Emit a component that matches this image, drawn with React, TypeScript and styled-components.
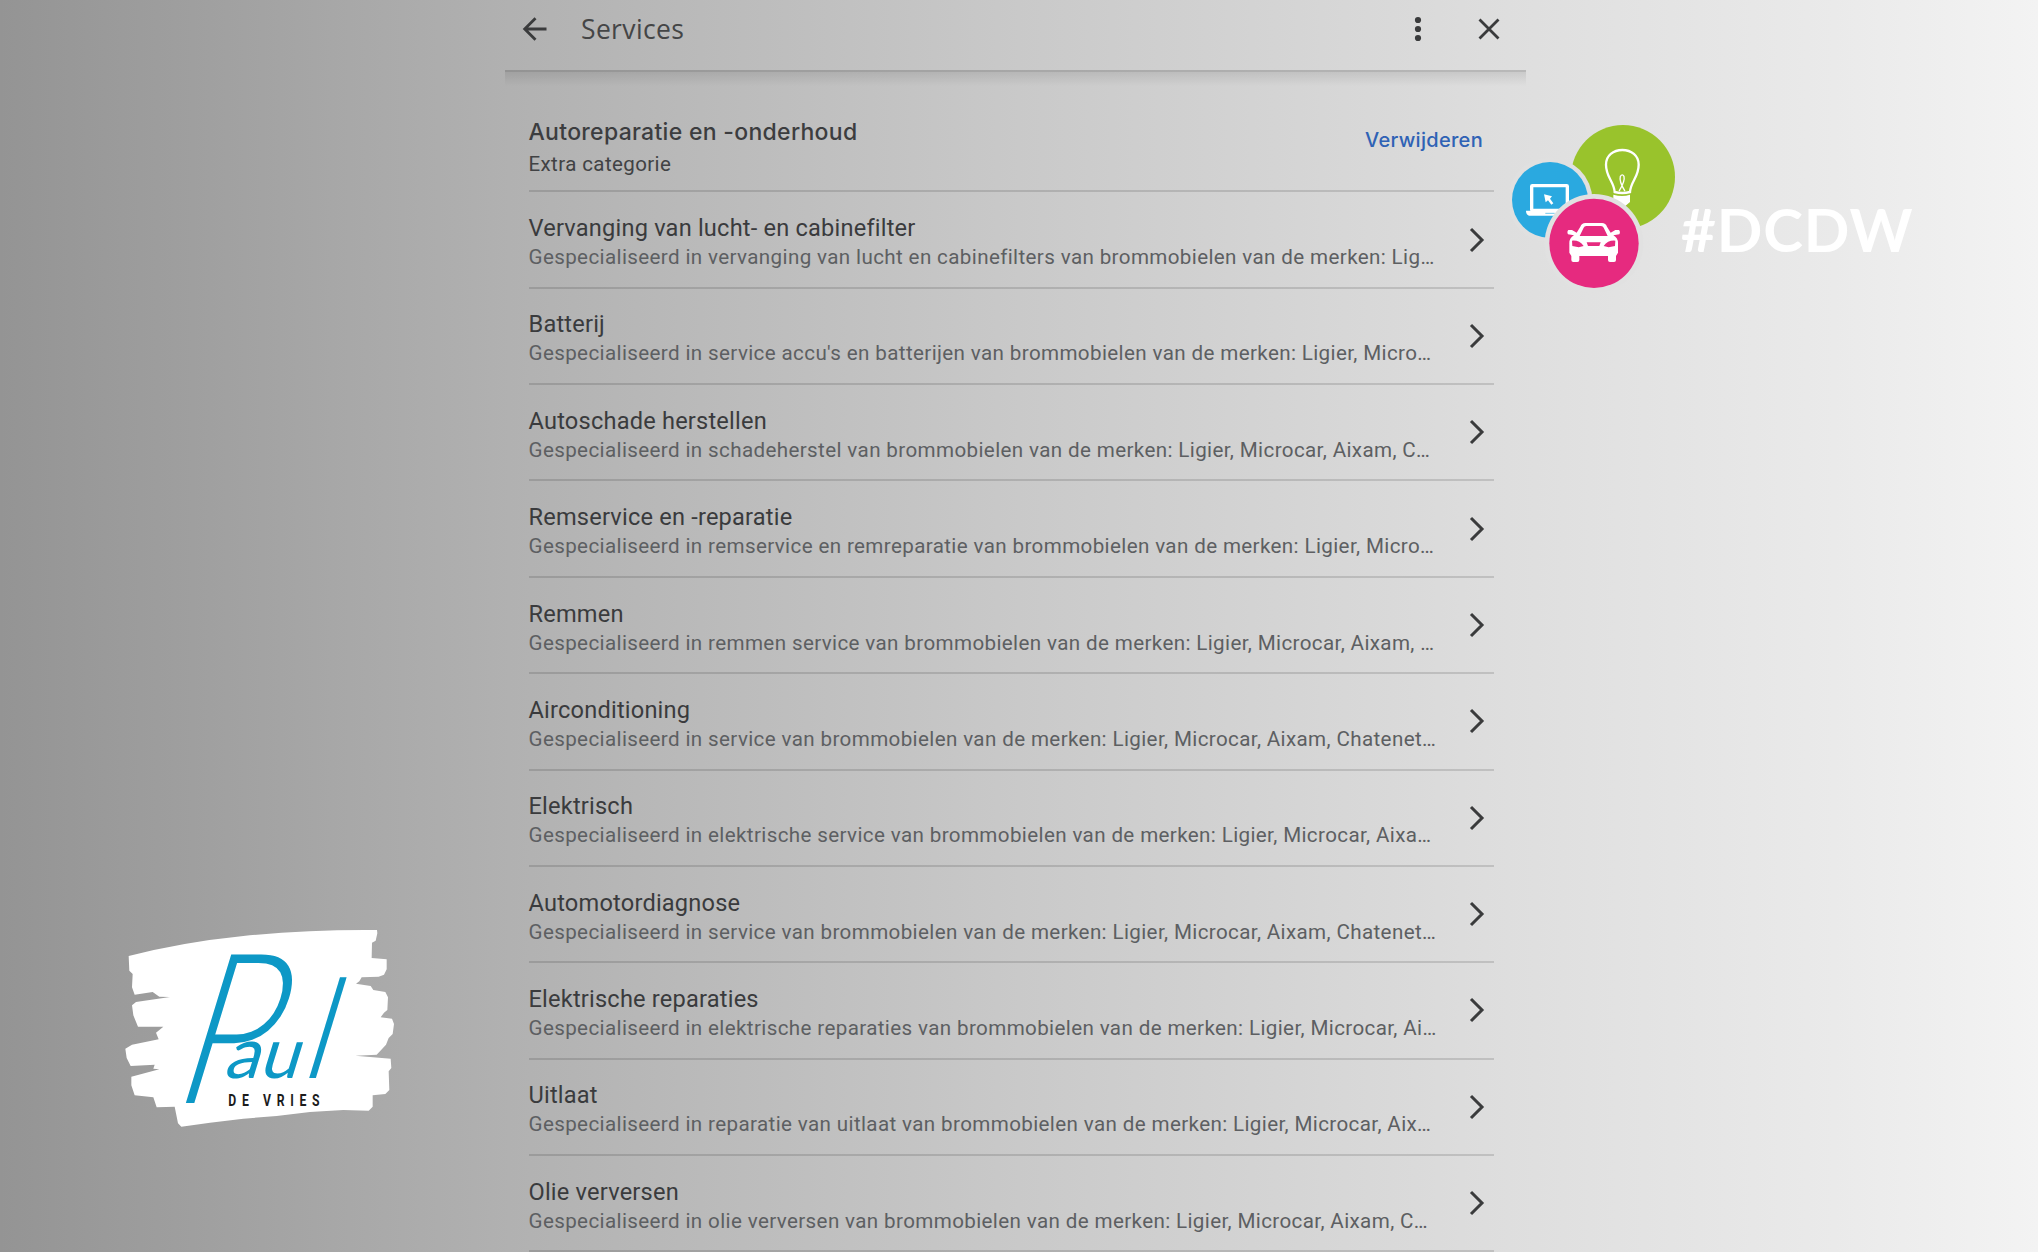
import React from "react";
import styled, { createGlobalStyle } from "styled-components";

const GlobalStyle = createGlobalStyle`
  * { box-sizing: border-box; }
  html, body { margin: 0; padding: 0; overflow: hidden; }
  body { font-family: Roboto, "Liberation Sans", sans-serif; }
`;

const Page = styled.div`
  display: grid;
  grid-template-columns: 505px 1021px 1fr;
  width: 2038px;
  height: 1252px;
  overflow: hidden;
  background: linear-gradient(
    90deg,
    #949494 0%,
    #a9a9a9 18%,
    #b1b1b1 25%,
    #c9c9c9 50%,
    #dedede 74%,
    #eaeaea 90%,
    #f3f3f3 100%
  );
`;

const LeftColumn = styled.aside`
  display: flex;
  flex-direction: column;
  justify-content: flex-end;
  padding: 0 0 112px 110px;
`;

const Panel = styled.main`
  display: flex;
  flex-direction: column;
  min-width: 0;
`;

const RightColumn = styled.aside`
  display: flex;
  align-items: flex-start;
  padding-top: 120px;
`;

const Header = styled.header`
  position: relative;
  flex: none;
  display: flex;
  align-items: center;
  height: 72px;
  padding: 0 23px 13px 15px;
  border-bottom: 2px solid rgba(0, 0, 0, 0.17);

  &::after {
    content: "";
    position: absolute;
    left: 0;
    right: 0;
    top: 72px;
    height: 14px;
    background: linear-gradient(180deg, rgba(0, 0, 0, 0.09), rgba(0, 0, 0, 0));
  }
`;

const HeaderTitle = styled.h1`
  flex: 1;
  margin: 0 0 0 31px;
  font: 400 26.5px/34px "Open Sans", sans-serif;
  letter-spacing: 0.35px;
  color: #444546;
`;

const IconButton = styled.button<{ $gap?: number }>`
  display: flex;
  margin: 0 0 0 ${(p) => p.$gap ?? 0}px;
  padding: 0;
  border: 0;
  background: none;
  color: #3a3b3c;
`;

const List = styled.section`
  margin: 0 32px 0 23.5px;
`;

const Category = styled.div`
  display: flex;
  justify-content: space-between;
  height: 120.4px;
  padding-top: 44px;
  border-bottom: 2px solid rgba(0, 0, 0, 0.13);
`;

const CategoryTitle = styled.h2`
  margin: 0;
  font: 500 23px/32px Inter, sans-serif;
  letter-spacing: 0.3px;
  color: #3c3d3f;
`;

const CategoryNote = styled.div`
  font-size: 20.5px;
  line-height: 32px;
  letter-spacing: 0.4px;
  color: #414244;
`;

const RemoveButton = styled.button`
  align-self: flex-start;
  margin: 10px 11px 0 0;
  padding: 0;
  border: 0;
  background: none;
  font: 500 20px/28px Inter, sans-serif;
  letter-spacing: 0.3px;
  color: #2f62b5;
`;

const Row = styled.article`
  display: flex;
  align-items: center;
  height: 96.36px;
  border-bottom: 2px solid rgba(0, 0, 0, 0.13);
`;

const RowText = styled.div`
  flex: 1;
  min-width: 0;
  padding-top: 6px;
`;

const RowTitle = styled.h3`
  margin: 0;
  font-size: 23.6px;
  font-weight: 400;
  line-height: 30px;
  letter-spacing: 0.2px;
  color: #3a3b3d;
`;

const RowDescription = styled.p`
  margin: 0;
  font-size: 20.6px;
  line-height: 29px;
  letter-spacing: 0.37px;
  white-space: nowrap;
  color: #5d5f62;
`;

const Chevron = styled.svg`
  flex: none;
  margin-right: 8px;
`;

const Bubbles = styled.svg`
  flex: none;
  margin-left: -16px;
`;

const Hashtag = styled.div`
  margin: 73px 0 0 1px;
  font: 700 60px/72px Lato, sans-serif;
  letter-spacing: 0.9px;
  color: #fff;
`;

const BrandMark = styled.svg`
  overflow: visible;
`;

const services: [string, string][] = [
  ["Vervanging van lucht- en cabinefilter", "Gespecialiseerd in vervanging van lucht en cabinefilters van brommobielen van de merken: Lig…"],
  ["Batterij", "Gespecialiseerd in service accu's en batterijen van brommobielen van de merken: Ligier, Micro…"],
  ["Autoschade herstellen", "Gespecialiseerd in schadeherstel van brommobielen van de merken: Ligier, Microcar, Aixam, C…"],
  ["Remservice en -reparatie", "Gespecialiseerd in remservice en remreparatie van brommobielen van de merken: Ligier, Micro…"],
  ["Remmen", "Gespecialiseerd in remmen service van brommobielen van de merken: Ligier, Microcar, Aixam, …"],
  ["Airconditioning", "Gespecialiseerd in service van brommobielen van de merken: Ligier, Microcar, Aixam, Chatenet…"],
  ["Elektrisch", "Gespecialiseerd in elektrische service van brommobielen van de merken: Ligier, Microcar, Aixa…"],
  ["Automotordiagnose", "Gespecialiseerd in service van brommobielen van de merken: Ligier, Microcar, Aixam, Chatenet…"],
  ["Elektrische reparaties", "Gespecialiseerd in elektrische reparaties van brommobielen van de merken: Ligier, Microcar, Ai…"],
  ["Uitlaat", "Gespecialiseerd in reparatie van uitlaat van brommobielen van de merken: Ligier, Microcar, Aix…"],
  ["Olie verversen", "Gespecialiseerd in olie verversen van brommobielen van de merken: Ligier, Microcar, Aixam, C…"],
];

const PaulLogo = () => (
  <BrandMark width="300" height="230" viewBox="0 0 900 690">
    <path
      fill="#fff"
      d="M56 138 Q220 96 400 78 Q600 58 801 60 L802 70 L797 92 L786 98 L785 144 L830 148 L830 178 L822 194 L806 200 L755 202 L748 214 L738 221 L782 228 L790 240 L826 246 L834 262 L832 300 L822 308 L812 322 L846 326 L852 342 L848 372 L836 384 L828 404 L800 434 L736 437 L842 446 L844 474 L836 484 L838 540 L826 552 L788 556 L788 590 L776 602 L700 600 L600 606 L500 618 L400 626 L300 638 L214 650 L204 640 L194 590 L140 592 L130 562 L74 556 L64 526 L64 500 L148 478 L130 476 L134 464 L62 468 L50 444 L46 416 L66 404 L146 388 L138 368 L160 350 L84 350 L70 316 L66 286 L78 276 L180 261 L148 260 L128 246 L74 254 L66 232 L68 192 L58 182 Z"
    />
    <g fill="#0d98c6" fontFamily="Lato, sans-serif" fontWeight="300">
      <text transform="translate(176 580) skewX(-17) scale(.78 1)" fontSize="630">P</text>
      <text transform="translate(0 504) skewX(-17)">
        <tspan x="338" fontSize="212" fontWeight="400">au</tspan>
        <tspan x="562" fontSize="415">l</tspan>
      </text>
    </g>
    <text transform="translate(355 588) scale(.75 1)" fill="#1c1c1c" fontFamily="Roboto, sans-serif" fontWeight="700" fontSize="49" letterSpacing="22.5">
      DE VRIES
    </text>
  </BrandMark>
);

const BubbleLogo = () => (
  <Bubbles width="170" height="174" viewBox="60 30 510 522">
    <circle cx="399" cy="201" r="156" fill="#99c32c" />
    <g fill="none" stroke="#fff" strokeLinecap="round">
      <path strokeWidth="7" d="M374 246C372 214 348 202 348 164C348 137 370 120 397 120S446 137 446 164C446 202 422 214 420 246Q397 252 374 246Z" />
      <path strokeWidth="4" d="M388 242C400 222 404 206 402 199Q397 190 391 199C389 206 392 222 404 242" />
    </g>
    <path fill="#fff" d="M370 254Q397 262 420 254V276L406 288H385L370 276Z" />
    <circle cx="180" cy="270" r="127" fill="#e0e0e0" />
    <circle cx="180" cy="270" r="114" fill="#2aa9e0" />
    <rect x="125" y="227" width="107" height="74" rx="2" fill="none" stroke="#fff" strokeWidth="10" />
    <path fill="#fff" d="M108 302H250V317H117Q108 314 108 302Z" />
    <path stroke="#2aa9e0" strokeWidth="2" d="M166 310H194" />
    <path fill="#fff" d="M162 253L186 259L180 266L190 280L184 284L174 271L167 277Z" />
    <circle cx="312" cy="400" r="148" fill="#e1e1e1" />
    <circle cx="312" cy="400" r="134" fill="#e62a7f" />
    <path
      fill="#fff"
      fillRule="evenodd"
      d="M271 350Q275 339 286 339H336Q347 339 351 350L362 368L376 360H387Q392 365 388 373L370 376Q385 384 384 402V428L378 438V450Q378 456 372 456H360Q354 456 354 450V438H268V450Q268 456 262 456H250Q244 456 244 450V438L238 428V402Q237 384 252 376L234 373Q230 365 235 360H246L260 368ZM281 353Q283 348 289 348H333Q339 348 341 353L353 378H269ZM246 392Q268 390 281 408L266 412L247 408ZM376 392Q354 390 341 408L356 412L375 408ZM290 397H332L328 408H294Z"
    />
  </Bubbles>
);

export default function App() {
  return (
    <>
      <GlobalStyle />
      <Page>
        <LeftColumn>
          <PaulLogo />
        </LeftColumn>
        <Panel>
          <Header>
            <IconButton aria-label="Terug">
              <svg width="30" height="28" viewBox="0 0 30 28" fill="none" stroke="currentColor" strokeWidth="2.8">
                <path d="M26.5 14H5M15.5 3.2L4.7 14L15.5 24.8" />
              </svg>
            </IconButton>
            <HeaderTitle>Services</HeaderTitle>
            <IconButton aria-label="Meer">
              <svg width="8" height="28" viewBox="0 0 8 28" fill="currentColor">
                <circle cx="4" cy="5" r="3.1" />
                <circle cx="4" cy="14" r="3.1" />
                <circle cx="4" cy="23" r="3.1" />
              </svg>
            </IconButton>
            <IconButton aria-label="Sluiten" $gap={53}>
              <svg width="28" height="28" viewBox="0 0 28 28" fill="none" stroke="currentColor" strokeWidth="2.8">
                <path d="M4.5 4.5L23.5 23.5M23.5 4.5L4.5 23.5" />
              </svg>
            </IconButton>
          </Header>
          <List>
            <Category>
              <div>
                <CategoryTitle>Autoreparatie en -onderhoud</CategoryTitle>
                <CategoryNote>Extra categorie</CategoryNote>
              </div>
              <RemoveButton>Verwijderen</RemoveButton>
            </Category>
            {services.map(([title, description]) => (
              <Row key={title}>
                <RowText>
                  <RowTitle>{title}</RowTitle>
                  <RowDescription>{description}</RowDescription>
                </RowText>
                <Chevron width="18" height="26" viewBox="0 0 18 26" fill="none" stroke="#3a3b3c" strokeWidth="3">
                  <path d="M3 2L14 13L3 24" />
                </Chevron>
              </Row>
            ))}
          </List>
        </Panel>
        <RightColumn>
          <BubbleLogo />
          <Hashtag>#DCDW</Hashtag>
        </RightColumn>
      </Page>
    </>
  );
}
